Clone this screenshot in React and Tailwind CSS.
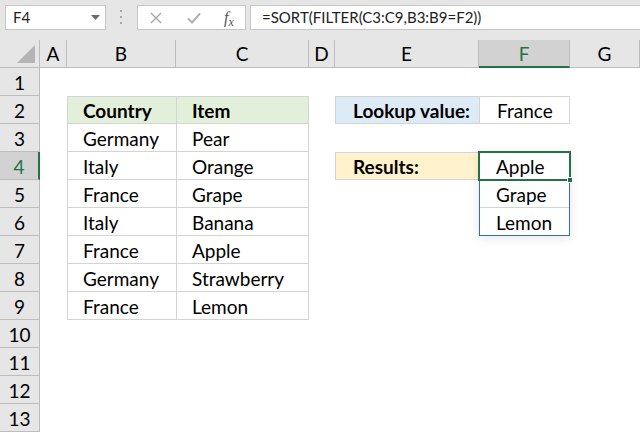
import React from 'react';

const cols = ['A', 'B', 'C', 'D', 'E', 'F', 'G'];
const rows = [
  ['Germany', 'Pear'],
  ['Italy', 'Orange'],
  ['France', 'Grape'],
  ['Italy', 'Banana'],
  ['France', 'Apple'],
  ['Germany', 'Strawberry'],
  ['France', 'Lemon'],
];

const tb = 'border-[#d4d4d4]';

function Toolbar() {
  return (
    <div className="flex h-[40px] items-start bg-[#e6e6e6] pt-[5px] font-[Lato,sans-serif] text-[15px] text-[#222]">
      <div className="ml-[5px] flex h-[25px] w-[101px] items-center justify-between border border-[#c6c6c6] bg-white pl-[7px] pr-[5px]">
        <span>F4</span>
        <svg width="9" height="5" viewBox="0 0 9 5"><path d="M0 0h9L4.5 5z" fill="#6b6b6b" /></svg>
      </div>
      <div className="flex w-[31px] justify-center pt-[5px]">
        <svg width="3" height="15" viewBox="0 0 3 15">
          <rect x="0" y="0" width="2" height="2" fill="#a6a6a6" />
          <rect x="0" y="6" width="2" height="2" fill="#a6a6a6" />
          <rect x="0" y="12" width="2" height="2" fill="#a6a6a6" />
        </svg>
      </div>
      <div className="flex h-[25px] w-[109px] items-center border border-[#c6c6c6] bg-white">
        <div className="flex w-[36px] justify-center">
          <svg width="12" height="12" viewBox="0 0 12 12"><path d="M1 1l10 10M11 1L1 11" stroke="#a6a6a6" strokeWidth="1.4" /></svg>
        </div>
        <div className="flex w-[40px] justify-center">
          <svg width="14" height="12" viewBox="0 0 14 12"><path d="M1 6.5l4 4L13 1.5" stroke="#b0b0b0" strokeWidth="2" fill="none" /></svg>
        </div>
        <div className="flex w-[30px] items-end justify-center font-['Liberation_Serif',serif] italic leading-none text-[#555]">
          <span className="text-[16px]">f</span>
          <span className="relative top-[2px] text-[12px]">x</span>
        </div>
      </div>
      <div className="ml-[4px] flex h-[25px] flex-1 items-center border border-r-0 border-[#c6c6c6] bg-white pl-[11px]">
        =SORT(FILTER(C3:C9,B3:B9=F2))
      </div>
    </div>
  );
}

function ColHeader({ c }) {
  const sel = c === 'F';
  return (
    <div
      className={`flex items-center justify-center border-r border-b border-[#bdbdbd] pt-[2px] ${
        sel ? 'border-b-2 border-b-[#217346] bg-[#d2d2d2] text-[#217346]' : 'bg-[#e6e6e6] text-black'
      }`}
    >
      {c}
    </div>
  );
}

function RowHeader({ n }) {
  const sel = n === 4;
  return (
    <div
      className={`flex items-center justify-center border-b border-r border-[#bdbdbd] pt-[3px] ${
        sel ? 'border-r-2 border-r-[#217346] bg-[#d2d2d2] text-[#217346]' : 'bg-[#e6e6e6] text-black'
      }`}
    >
      {n}
    </div>
  );
}

function Cell({ children, className = '' }) {
  return <div className={`flex items-center pl-[15px] pt-[3px] ${className}`}>{children}</div>;
}

function Row({ n }) {
  const cells = Array(7).fill(null);
  if (n === 2) {
    cells[1] = <Cell key="b" className={`border border-r-0 ${tb} bg-[#e2efda] font-bold`}>Country</Cell>;
    cells[2] = <Cell key="c" className={`border ${tb} bg-[#e2efda] font-bold`}>Item</Cell>;
    cells[4] = <Cell key="e" className={`border border-r-0 ${tb} bg-[#ddebf7] pl-[17px] font-bold`}>Lookup value:</Cell>;
    cells[5] = <Cell key="f" className={`border ${tb} pl-[17px]`}>France</Cell>;
  } else if (n >= 3 && n <= 9) {
    const [a, b] = rows[n - 3];
    cells[1] = <Cell key="b" className={`border-b border-l ${tb}`}>{a}</Cell>;
    cells[2] = <Cell key="c" className={`border-b border-x ${tb}`}>{b}</Cell>;
  }
  if (n === 4) {
    cells[4] = <Cell key="e" className={`border ${tb} bg-[#fff2cc] pl-[17px] font-bold`}>Results:</Cell>;
    cells[5] = (
      <Cell key="f" className="relative pl-[17px]">
        Apple
        <div className="pointer-events-none absolute left-0 top-0 z-10 h-[84px] w-full border border-[#2f6bd6] shadow-[0_2px_10px_rgba(0,0,0,0.10)]" />
        <div className="pointer-events-none absolute -left-[1px] -top-[1px] z-20 h-[30px] w-[93px] border-2 border-[#217346]" />
        <div className="absolute -bottom-[3px] -right-[3px] z-30 h-[6px] w-[6px] border border-white bg-[#217346]" />
      </Cell>
    );
  }
  if (n === 5) cells[5] = <Cell key="f" className={`border-b ${tb} pl-[17px]`}>Grape</Cell>;
  if (n === 6) cells[5] = <Cell key="f" className="pl-[17px]">Lemon</Cell>;
  return (
    <>
      <RowHeader n={n} />
      {cells.map((c, i) => c || <div key={i} />)}
    </>
  );
}

export default function App() {
  return (
    <div className="h-[433px] w-[640px] overflow-hidden bg-white">
      <Toolbar />
      <div className="grid auto-rows-[28px] grid-cols-[40px_27px_109px_133px_26px_144px_91px_70px] font-[Lato,sans-serif] text-[19px] text-black">
        <div className="relative border-b border-r border-[#bdbdbd] bg-[#e6e6e6]">
          <svg className="absolute bottom-[4px] right-[4px]" width="18" height="18" viewBox="0 0 18 18">
            <path d="M18 0V18H0z" fill="#b4b4b4" />
          </svg>
        </div>
        {cols.map((c) => (
          <ColHeader key={c} c={c} />
        ))}
        {Array.from({ length: 13 }, (_, i) => (
          <Row key={i} n={i + 1} />
        ))}
      </div>
    </div>
  );
}
